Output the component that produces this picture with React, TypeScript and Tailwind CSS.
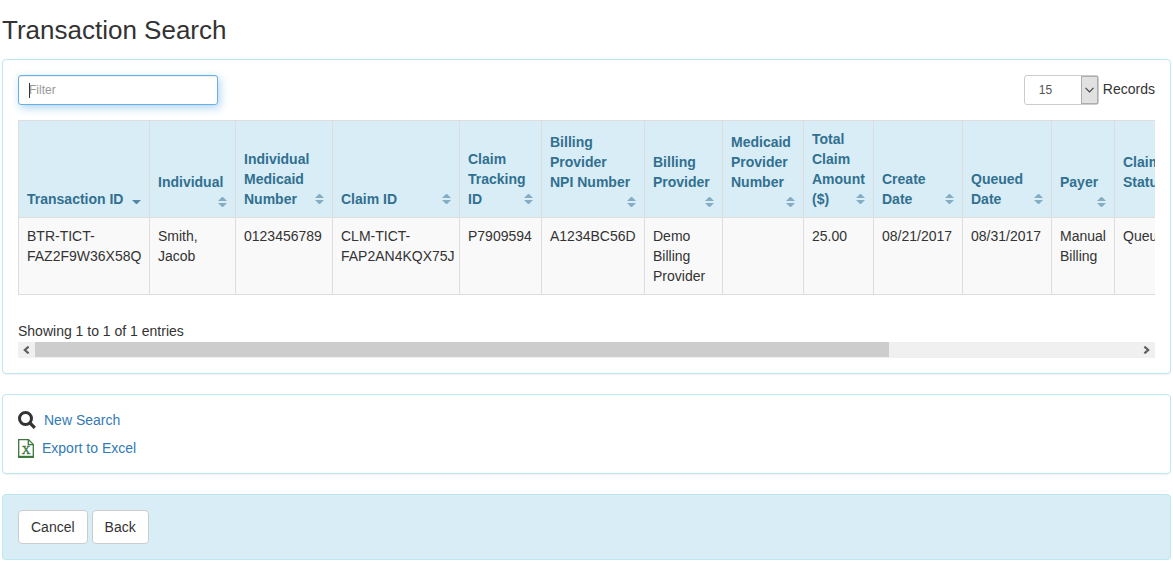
import React, { useLayoutEffect, useRef, useState } from 'react';

type Column = {
  label: string;
  width: number;
  stacked?: boolean;
  sorted?: boolean;
};

const columns: Column[] = [
  { label: 'Transaction ID', width: 131, sorted: true },
  { label: 'Individual', width: 86, stacked: true },
  { label: 'Individual\nMedicaid\nNumber', width: 97 },
  { label: 'Claim ID', width: 127 },
  { label: 'Claim\nTracking\nID', width: 82 },
  { label: 'Billing\nProvider\nNPI Number', width: 103, stacked: true },
  { label: 'Billing\nProvider', width: 78, stacked: true },
  { label: 'Medicaid\nProvider\nNumber', width: 81, stacked: true },
  { label: 'Total\nClaim\nAmount\n($)', width: 70 },
  { label: 'Create\nDate', width: 89 },
  { label: 'Queued\nDate', width: 89 },
  { label: 'Payer', width: 63, stacked: true },
  { label: 'Claim\nStatus', width: 371, stacked: true },
];

const rows = [
  [
    'BTR-TICT-\nFAZ2F9W36X58Q',
    'Smith,\nJacob',
    '0123456789',
    'CLM-TICT-\nFAP2AN4KQX75J',
    'P7909594',
    'A1234BC56D',
    'Demo\nBilling\nProvider',
    '',
    '25.00',
    '08/21/2017',
    '08/31/2017',
    'Manual\nBilling',
    'Queued',
  ],
];

const SortIcon = ({ sorted }: { sorted?: boolean }) => (
  <svg width="9" height="10" viewBox="0 0 9 10" className={sorted ? 'fill-[#5089a6]' : 'fill-[#84adc4]'} aria-hidden="true">
    {!sorted && <path d="M0 4L4 0H5L9 4Z" />}
    <path d="M0 6H9L5 10H4Z" />
  </svg>
);

const SearchIcon = () => (
  <svg width="18" height="18" viewBox="0 0 18 18" fill="none" stroke="#333" aria-hidden="true">
    <circle cx="7.5" cy="7.5" r="6" strokeWidth="3" />
    <path d="M12 12L16.8 16.8" strokeWidth="3.2" />
  </svg>
);

const ExcelIcon = () => (
  <svg width="16" height="19" viewBox="0 0 16 19" fill="none" stroke="#3c763d" aria-hidden="true">
    <path d="M0.7 0.6H10.5L15.3 5.4V18H0.7Z" strokeWidth="1.3" />
    <path d="M10.3 0.7V5.6H15.3" strokeWidth="1.3" />
    <path d="M0 17.8H16" strokeWidth="2" />
    <text
      x="8"
      y="15"
      textAnchor="middle"
      stroke="#3c763d"
      strokeWidth="0.4"
      fill="#3c763d"
      className="font-['Liberation_Serif',serif] text-[12px]"
    >
      X
    </text>
  </svg>
);

const panel = 'rounded border border-[#bce8f1] p-[15px] shadow-[0_1px_1px_rgba(0,0,0,0.05)]';
const button = 'h-[34px] rounded border border-[#ccc] bg-white px-3 text-[#333] hover:bg-[#e6e6e6]';

const App: React.FC = () => {
  const [filter, setFilter] = useState('');
  const [thumb, setThumb] = useState({ left: 0, width: 77 });
  const scroller = useRef<HTMLDivElement>(null);

  const updateThumb = () => {
    const el = scroller.current;
    if (!el) return;
    setThumb({
      left: (el.scrollLeft / el.scrollWidth) * 100,
      width: (el.clientWidth / el.scrollWidth) * 100,
    });
  };

  useLayoutEffect(() => {
    updateThumb();
    window.addEventListener('resize', updateThumb);
    return () => window.removeEventListener('resize', updateThumb);
  }, []);

  const scroll = (left: number) => scroller.current?.scrollBy({ left });

  const visibleRows = rows.filter((row) => row.join(' ').toLowerCase().includes(filter.toLowerCase()));

  return (
    <div className="bg-white px-0.5 pt-3 font-['Liberation_Sans',Arial,sans-serif] text-[14px] leading-5 text-[#333]">
      <h1 className="mb-[11px] text-[26px] leading-9">Transaction Search</h1>

      <section className={`${panel} mb-5 bg-white`}>
        <div className="mb-[15px] flex items-start justify-between">
          <div className="relative">
            <input
              type="text"
              aria-label="Filter"
              placeholder="Filter"
              value={filter}
              onChange={(e) => setFilter(e.target.value)}
              className="block h-[30px] w-[200px] rounded-[3px] border border-[#66afe9] bg-white px-2.5 text-[12px] text-[#555] shadow-[inset_0_1px_1px_rgba(0,0,0,0.075),2px_3px_8px_rgba(102,175,233,0.5)] outline-none placeholder:text-[#999]"
            />
            {!filter && <span className="pointer-events-none absolute top-2 left-[11px] h-[15px] w-px bg-[#333]" />}
          </div>

          <label className="flex items-start gap-1">
            <span className="relative">
              <select
                defaultValue="15"
                className="block h-[30px] w-[75px] appearance-none rounded-[3px] border border-[#ccc] bg-white pl-3.5 text-[12px] text-[#555]"
              >
                <option>15</option>
              </select>
              <span className="pointer-events-none absolute inset-y-px right-px flex w-[17px] items-center justify-center border border-[#adadad] bg-[#e1e1e1]">
                <svg width="9" height="6" viewBox="0 0 9 6" fill="none" stroke="#444" strokeWidth="1.2" aria-hidden="true">
                  <path d="M0.5 0.8L4.5 4.8L8.5 0.8" />
                </svg>
              </span>
            </span>
            <span className="pt-1">Records</span>
          </label>
        </div>

        <div ref={scroller} onScroll={updateThumb} className="overflow-x-auto [scrollbar-width:none]">
          <table className="w-[1468px] table-fixed border-separate border-spacing-0 border-t border-l border-[#ddd]">
            <colgroup>
              {columns.map((column) => (
                <col key={column.label} style={{ width: column.width }} />
              ))}
            </colgroup>
            <thead>
              <tr className="bg-[#d9edf7] text-[#31708f]">
                {columns.map((column) => (
                  <th key={column.label} scope="col" className="border-r border-b border-[#ddd] p-2 text-left align-bottom font-bold">
                    {column.stacked ? (
                      <div className="flex flex-col">
                        <span className="whitespace-pre">{column.label}</span>
                        <span className="flex h-[17px] items-end justify-end pb-0.5">
                          <SortIcon />
                        </span>
                      </div>
                    ) : (
                      <div className="flex items-end">
                        <span className="min-w-0 flex-1 whitespace-pre">{column.label}</span>
                        <span className="shrink-0 pb-[5px]">
                          <SortIcon sorted={column.sorted} />
                        </span>
                      </div>
                    )}
                  </th>
                ))}
              </tr>
            </thead>
            <tbody>
              {visibleRows.map((row) => (
                <tr key={row[0]} className="bg-[#f9f9f9]">
                  {row.map((cell, i) => (
                    <td key={columns[i].label} className="border-r border-b border-[#ddd] p-2 align-top whitespace-pre">
                      {cell}
                    </td>
                  ))}
                </tr>
              ))}
            </tbody>
          </table>
        </div>

        <p className="mt-[26px] mb-px">Showing 1 to 1 of 1 entries</p>

        <div className="flex h-4 bg-[#f0f0f0]">
          <button type="button" aria-label="Scroll left" onClick={() => scroll(-80)} className="flex w-[17px] items-center justify-center">
            <svg width="7" height="8" viewBox="0 0 7 8" fill="none" stroke="#606060" strokeWidth="2.2" aria-hidden="true">
              <path d="M5.6 0.6L1.8 4L5.6 7.4" />
            </svg>
          </button>
          <div className="flex-1">
            <div className="h-[15px] bg-[#cdcdcd]" style={{ marginLeft: `${thumb.left}%`, width: `${thumb.width}%` }} />
          </div>
          <button type="button" aria-label="Scroll right" onClick={() => scroll(80)} className="flex w-[17px] items-center justify-center">
            <svg width="7" height="8" viewBox="0 0 7 8" fill="none" stroke="#606060" strokeWidth="2.2" aria-hidden="true">
              <path d="M1.4 0.6L5.2 4L1.4 7.4" />
            </svg>
          </button>
        </div>
      </section>

      <section className={`${panel} mb-5 flex flex-col items-start gap-2 bg-white text-[#337ab7]`}>
        <a href="#search" className="flex h-5 items-center gap-2 hover:underline">
          <SearchIcon />
          New Search
        </a>
        <a href="#export" className="flex h-5 items-center gap-2 hover:underline">
          <ExcelIcon />
          Export to Excel
        </a>
      </section>

      <section className={`${panel} flex gap-1 bg-[#d9edf7]`}>
        <button type="button" className={button}>
          Cancel
        </button>
        <button type="button" className={button}>
          Back
        </button>
      </section>
    </div>
  );
};

export default App;
